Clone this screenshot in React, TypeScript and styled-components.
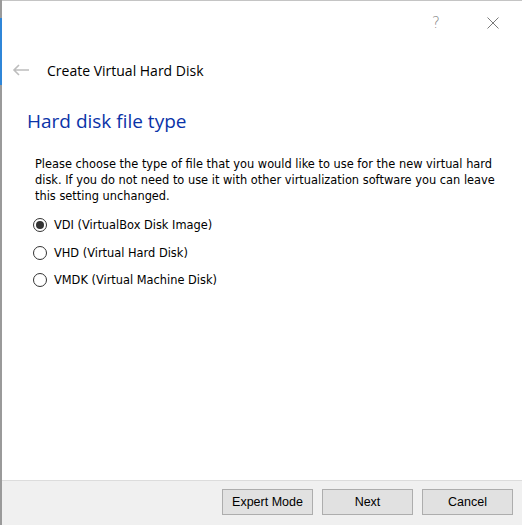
import styled, { createGlobalStyle } from 'styled-components';

const GlobalStyle = createGlobalStyle`
  html, body {
    margin: 0;
    padding: 0;
    height: 100%;
    overflow: hidden;
  }
  #root {
    height: 100%;
  }
`;

interface IOption {
  id: string;
  label: string;
  checked?: boolean;
}

const OPTION_LIST: IOption[] = [{
  id: 'vdi',
  label: 'VDI (VirtualBox Disk Image)',
  checked: true
}, {
  id: 'vhd',
  label: 'VHD (Virtual Hard Disk)'
}, {
  id: 'vmdk',
  label: 'VMDK (Virtual Machine Disk)'
}];

const ScFrame = styled.div`
  box-sizing: border-box;
  height: 100%;
  padding: 1px 0 0 2px;
  background:
    linear-gradient(to bottom, #9a9a9a 0 18px, #2f86d8 18px 85px, #9a9a9a 85px) left top / 2px 100% no-repeat,
    #c4c4c4;
`;

const ScWindow = styled.div`
  display: flex;
  flex-direction: column;
  height: 100%;
  background: #fff;
  font-family: "DejaVu Sans", Verdana, sans-serif;
  color: #000;
`;

const ScTitleBar = styled.div`
  display: flex;
  justify-content: flex-end;
  align-items: center;
  height: 44px;
`;

const ScTitleButton = styled.div`
  display: flex;
  align-items: center;
  justify-content: center;
  width: 46px;
  height: 40px;
  margin-left: 11px;
  color: #8a8a8a;
  font-family: "DejaVu Sans", sans-serif;
  font-weight: 200;
  font-size: 15px;

  &:last-child {
    margin-left: 11px;
    margin-right: 6px;
  }
`;

const ScHeader = styled.div`
  display: flex;
  align-items: center;
  height: 50px;
  padding-left: 10px;
`;

const ScHeaderTitle = styled.span`
  margin-left: 17px;
  font-family: "Open Sans", sans-serif;
  font-size: 14px;
  color: #000;
`;

const ScBody = styled.div`
  flex: 1;
  padding: 13px 0 0 25px;
`;

const ScHeading = styled.h1`
  margin: 0;
  font-family: "Open Sans", sans-serif;
  font-weight: 400;
  font-size: 19px;
  line-height: 26px;
  color: #0a33a8;
`;

const ScText = styled.p`
  margin: 22px 16px 0 8px;
  font-size: 11.4px;
  line-height: 16px;
`;

const ScOptions = styled.div`
  display: flex;
  flex-direction: column;
  gap: 11.5px;
  margin: 13px 0 0 6px;
`;

const ScOption = styled.label`
  display: flex;
  align-items: center;
  gap: 7px;
  height: 16px;
  font-size: 11.4px;
`;

const ScRadio = styled.span<{ $checked?: boolean }>`
  box-sizing: border-box;
  display: flex;
  align-items: center;
  justify-content: center;
  width: 14px;
  height: 14px;
  border: 1px solid #333;
  border-radius: 50%;
  background: #fff;

  &::after {
    content: '';
    display: ${({ $checked }) => ($checked ? 'block' : 'none')};
    width: 8px;
    height: 8px;
    border-radius: 50%;
    background: #333;
  }
`;

const ScFooter = styled.div`
  display: flex;
  justify-content: flex-end;
  gap: 9px;
  height: 45px;
  padding: 8px 9px 0 0;
  box-sizing: border-box;
  border-top: 1px solid #dcdcdc;
  background: #f0f0f0;
`;

const ScButton = styled.button`
  width: 91px;
  height: 26px;
  padding: 0;
  border: 1px solid #adadad;
  background: #e1e1e1;
  font-family: "Liberation Sans", Arial, sans-serif;
  font-size: 12.5px;
  color: #000;
`;

function BackArrow() {
  return <svg width="18" height="12" viewBox="0 0 18 12">
    <path d="M17 6H2M7 1L2 6l5 5" fill="none" stroke="#bdbdbd" strokeWidth="1.6" />
  </svg>;
}

function CloseIcon() {
  return <svg width="12" height="12" viewBox="0 0 12 12">
    <path d="M0.5 0.5l11 11M11.5 0.5l-11 11" stroke="#7a7a7a" strokeWidth="1" />
  </svg>;
}

export default function App() {
  return <>
    <GlobalStyle />
    <ScFrame>
      <ScWindow>
        <ScTitleBar>
          <ScTitleButton>?</ScTitleButton>
          <ScTitleButton><CloseIcon /></ScTitleButton>
        </ScTitleBar>
        <ScHeader>
          <BackArrow />
          <ScHeaderTitle>Create Virtual Hard Disk</ScHeaderTitle>
        </ScHeader>
        <ScBody>
          <ScHeading>Hard disk file type</ScHeading>
          <ScText>
            Please choose the type of file that you would like to use for the new virtual hard
            disk. If you do not need to use it with other virtualization software you can leave
            this setting unchanged.
          </ScText>
          <ScOptions>
            {OPTION_LIST.map(option => <ScOption key={option.id}>
              <ScRadio $checked={option.checked} />
              {option.label}
            </ScOption>)}
          </ScOptions>
        </ScBody>
        <ScFooter>
          <ScButton>Expert Mode</ScButton>
          <ScButton>Next</ScButton>
          <ScButton>Cancel</ScButton>
        </ScFooter>
      </ScWindow>
    </ScFrame>
  </>;
}
